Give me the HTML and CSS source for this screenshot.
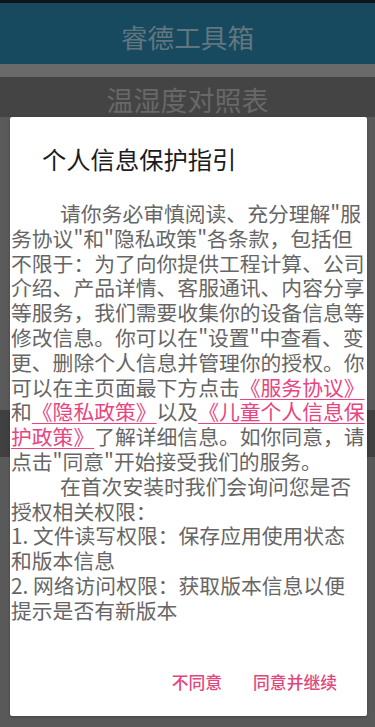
FILE: index.html
```html
<!DOCTYPE html>
<html lang="zh-CN">
<head>
<meta charset="utf-8">
<title>睿德工具箱</title>
<link rel="stylesheet" href="styles.css">
</head>
<body>
<div class="screen">
  <div class="status"></div>
  <header class="appbar"><h1 class="appbar-title">睿德工具箱</h1></header>
  <div class="tabline"></div>
  <div class="subtitle">温湿度对照表</div>
  <div class="content">
    <div class="spacer-top"></div>
    <div class="row-dark"></div>
    <div class="spacer-bottom"></div>
  </div>

  <div class="dialog">
    <h2 class="dialog-title">个人信息保护指引</h2>
    <div class="dialog-body">
      <p class="para indent">请你务必审慎阅读、充分理解"服<br>务协议"和"隐私政策"各条款，包括但<br>不限于：为了向你提供工程计算、公司<br>介绍、产品详情、客服通讯、内容分享<br>等服务，我们需要收集你的设备信息等<br>修改信息。你可以在"设置"中查看、变<br>更、删除个人信息并管理你的授权。你<br>可以在主页面最下方点击<a class="link">《服务协议》</a><br>和<a class="link">《隐私政策》</a>以及<a class="link">《儿童个人信息保<br>护政策》</a>了解详细信息。如你同意，请<br>点击"同意"开始接受我们的服务。</p>
      <p class="para indent">在首次安装时我们会询问您是否<br>授权相关权限：</p>
      <p class="para">1. 文件读写权限：保存应用使用状态<br>和版本信息<br>2. 网络访问权限：获取版本信息以便<br>提示是否有新版本</p>
    </div>
    <div class="dialog-actions">
      <span class="btn">不同意</span>
      <span class="btn">同意并继续</span>
    </div>
  </div>
</div>
</body>
</html>
```

FILE: styles.css
```css
* { box-sizing: border-box; }
html, body {
  margin: 0;
  padding: 0;
  background: #5a5a5a;
}
body {
  font-family: "Noto Sans CJK SC", "Noto Sans", sans-serif;
}
.screen {
  position: relative;
  width: 375px;
  height: 727px;
  overflow: hidden;
  display: flex;
  flex-direction: column;
}
.status {
  height: 3px;
  background: #0e1417;
}
.appbar {
  height: 61px;
  background: #174a5f;
  padding-top: 20px;
}
.appbar-title {
  margin: 0;
  text-align: center;
  font-size: 26.6px;
  line-height: 27px;
  font-weight: 400;
  color: #62767f;
}
.tabline {
  height: 13px;
  background: #6a6a6a;
}
.subtitle {
  height: 40px;
  background: #444444;
  padding-top: 9px;
  text-align: center;
  font-size: 27px;
  line-height: 28px;
  color: #686868;
}
.content {
  flex: 1;
  display: flex;
  flex-direction: column;
}
.spacer-top {
  height: 293px;
  background: #5a5a5a;
}
.row-dark {
  height: 47px;
  background: #404040;
}
.spacer-bottom {
  flex: 1;
  background: #595959;
}

.dialog {
  position: absolute;
  top: 117px;
  left: 10px;
  width: 357px;
  height: 599px;
  background: #ffffff;
  border-radius: 2px;
  box-shadow: 0 1px 3px rgba(0,0,0,0.25);
  display: flex;
  flex-direction: column;
  padding: 30px 1px 14px 1px;
}
.dialog-title {
  margin: 0 0 30px 31px;
  font-size: 24.3px;
  line-height: 24px;
  font-weight: 400;
  color: #1c1c1c;
}
.dialog-body {
  flex: 1;
  font-size: 20.8px;
  line-height: 24.8px;
  color: #666666;
  white-space: nowrap;
}
.para {
  margin: 0;
}
.indent {
  text-indent: 49px;
}
.link {
  color: #e8447f;
  text-decoration: underline;
  text-decoration-color: #e8447f;
  text-underline-offset: 3px;
  text-decoration-thickness: 1px;
}
.dialog-actions {
  height: 40px;
  display: flex;
  justify-content: flex-end;
  align-items: center;
  gap: 31px;
  padding-right: 29px;
}
.btn {
  font-size: 16.8px;
  line-height: 20px;
  font-weight: 500;
  color: #e3457d;
}
```
